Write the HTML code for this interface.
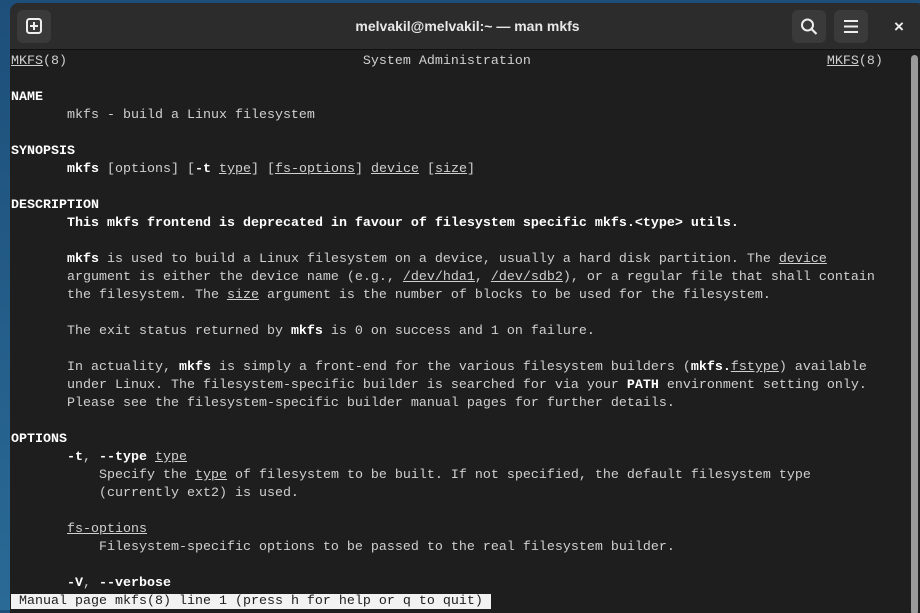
<!DOCTYPE html>
<html><head><style>
body{margin:0;width:920px;height:610px;overflow:hidden;background:linear-gradient(180deg,#1d4f7a,#2a6a96);font-family:"Liberation Mono",monospace;}
.win{position:absolute;left:10px;top:3px;width:915px;height:610px;background:#1e1e1e;border-radius:9px 9px 0 0;overflow:hidden;}
.hdr{position:absolute;left:0;top:0;right:0;height:46px;background:#2c2c2c;border-bottom:1px solid #111;}
.btn{position:absolute;top:7px;width:34px;height:33px;background:#3a3a3a;border-radius:6px;}
.title{position:absolute;left:0;right:0;top:15px;text-align:center;color:#e8e8e8;font:bold 14px "Liberation Sans",sans-serif;}
pre{position:absolute;left:1px;top:50px;margin:0;font-family:"Liberation Mono",monospace;font-size:13.33px;line-height:18px;color:#d0d0d0;}
b{color:#fff;font-weight:bold}
u{text-decoration:underline}
.sb{position:absolute;left:901px;top:52px;width:7px;height:560px;background:#9a9a9a;border-radius:4px;}
.status{background:#f2f2f2;color:#1e1e1e;padding:0 8px 0 8px;}
</style></head><body>
<div class="win">
<div class="hdr">
 <div class="btn" style="left:7px"><svg width="34" height="33"><rect x="10" y="9" width="14" height="14" rx="2.5" fill="none" stroke="#eee" stroke-width="2"/><path d="M17 12v8M13 16h8" stroke="#eee" stroke-width="2"/></svg></div>
 <div class="title">melvakil@melvakil:~ — man mkfs</div>
 <div class="btn" style="left:782px"><svg width="34" height="33"><circle cx="15.5" cy="15" r="5.5" fill="none" stroke="#eee" stroke-width="2"/><path d="M19.5 19l5 5" stroke="#eee" stroke-width="2.2"/></svg></div>
 <div class="btn" style="left:824px"><svg width="34" height="33"><path d="M10 11h14M10 16.5h14M10 22h14" stroke="#eee" stroke-width="2"/></svg></div>
 <div style="position:absolute;left:884px;top:14px;color:#eee;font:bold 17px 'Liberation Sans',sans-serif">×</div>
</div>
<pre><u>MKFS</u>(8)                                     System Administration                                     <u>MKFS</u>(8)

<b>NAME</b>
       mkfs - build a Linux filesystem

<b>SYNOPSIS</b>
       <b>mkfs</b> [options] [<b>-t</b> <u>type</u>] [<u>fs-options</u>] <u>device</u> [<u>size</u>]

<b>DESCRIPTION</b>
       <b>This mkfs frontend is deprecated in favour of filesystem specific mkfs.&lt;type&gt; utils.</b>

       <b>mkfs</b> is used to build a Linux filesystem on a device, usually a hard disk partition. The <u>device</u>
       argument is either the device name (e.g., <u>/dev/hda1</u>, <u>/dev/sdb2</u>), or a regular file that shall contain
       the filesystem. The <u>size</u> argument is the number of blocks to be used for the filesystem.

       The exit status returned by <b>mkfs</b> is 0 on success and 1 on failure.

       In actuality, <b>mkfs</b> is simply a front-end for the various filesystem builders (<b>mkfs.</b><u>fstype</u>) available
       under Linux. The filesystem-specific builder is searched for via your <b>PATH</b> environment setting only.
       Please see the filesystem-specific builder manual pages for further details.

<b>OPTIONS</b>
       <b>-t</b>, <b>--type</b> <u>type</u>
           Specify the <u>type</u> of filesystem to be built. If not specified, the default filesystem type
           (currently ext2) is used.

       <u>fs-options</u>
           Filesystem-specific options to be passed to the real filesystem builder.

       <b>-V</b>, <b>--verbose</b>
<span class="status">Manual page mkfs(8) line 1 (press h for help or q to quit)</span></pre>
<div class="sb"></div>
</div>
</body></html>
